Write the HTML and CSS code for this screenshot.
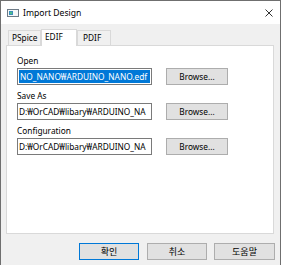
FILE: index.html
```html
<!DOCTYPE html>
<html lang="ko">
<head>
    <meta charset="UTF-8">
    <title>Import Design</title>
    <link rel="stylesheet" href="styles.css">
</head>
<body>
    <div class="window">
        <!-- Titelleiste -->
        <div class="titlebar">
            <svg class="app-icon" width="12" height="8" viewBox="0 0 12 8">
                <rect x="0.5" y="0.5" width="11" height="7" fill="#f4f6f8" stroke="#6d7a86"/>
                <rect x="2" y="2" width="4" height="4" fill="#3b8fb8"/>
                <rect x="3" y="3" width="2" height="2" fill="#4fbf8a"/>
            </svg>
            <span class="title">Import Design</span>
            <svg class="close" width="8" height="8" viewBox="0 0 8 8">
                <path d="M0.5 0.5 L7.5 7.5 M7.5 0.5 L0.5 7.5" stroke="#333" stroke-width="1"/>
            </svg>
        </div>

        <!-- Reiter -->
        <div class="tabs">
            <div class="tab">PSpice</div>
            <div class="tab active">EDIF</div>
            <div class="tab">PDIF</div>
        </div>

        <div class="panel">
            <div class="field">
                <div class="label">Open</div>
                <div class="row">
                    <div class="textbox"><span class="selected">NO_NANO₩ARDUINO_NANO.edf</span></div>
                    <button class="browse">Browse...</button>
                </div>
            </div>
            <div class="field">
                <div class="label">Save As</div>
                <div class="row">
                    <div class="textbox">D:₩OrCAD₩libary₩ARDUINO_NA</div>
                    <button class="browse">Browse...</button>
                </div>
            </div>
            <div class="field">
                <div class="label">Configuration</div>
                <div class="row">
                    <div class="textbox">D:₩OrCAD₩libary₩ARDUINO_NA</div>
                    <button class="browse">Browse...</button>
                </div>
            </div>
        </div>

        <!-- Schaltflächen -->
        <div class="footer">
            <button class="btn default">확인</button>
            <button class="btn">취소</button>
            <button class="btn help">도움말</button>
        </div>
    </div>
</body>
</html>
```

FILE: styles.css
```css
body {
    margin: 0;
    background-color: #ffffff;
    font-family: "Noto Sans", "Noto Sans CJK KR", sans-serif;
    font-size: 8.3px;
    color: #000000;
}
.window {
    width: 281px;
    height: 265px;
    box-sizing: border-box;
    border: 1px solid #6f6f6f;
    border-bottom: none;
    background-color: #f0f0f0;
}
.titlebar {
    height: 23px;
    background-color: #ffffff;
    display: flex;
    align-items: center;
    padding-left: 6px;
    padding-right: 7px;
    padding-top: 1px;
    box-sizing: border-box;
}
.app-icon {
    margin-right: 4px;
}
.title {
    flex: 1;
    font-size: 8.6px;
}
.tabs {
    display: flex;
    align-items: flex-end;
    height: 21px;
    padding-left: 7px;
}
.tab {
    height: 14px;
    line-height: 14px;
    padding: 0 3px;
    border: 1px solid #d9d9d9;
    border-bottom: none;
    background-color: #f0f0f0;
}
.tab:first-child {
    width: 25px;
}
.tab:last-child {
    width: 24px;
    padding-left: 5px;
}
.tab.active {
    height: 16px;
    line-height: 13px;
    width: 28px;
    background-color: #ffffff;
    margin-bottom: -1px;
    position: relative;
}
.panel {
    margin: 0 6px 0 5px;
    height: 189px;
    box-sizing: border-box;
    background-color: #ffffff;
    border: 1px solid #d9d9d9;
    padding: 8px 0 0 10px;
}
.field {
    margin-bottom: 4px;
}
.label {
    height: 14px;
    line-height: 13px;
}
.row {
    display: flex;
    align-items: center;
    gap: 14px;
}
.textbox {
    width: 135px;
    height: 17px;
    box-sizing: border-box;
    border: 1px solid #7a7a7a;
    padding: 1px;
    line-height: 13px;
    white-space: nowrap;
    overflow: hidden;
}
.selected {
    display: inline-block;
    width: 129px;
    background-color: #0078d7;
    color: #ffffff;
    padding: 0 1px;
}
.browse, .btn {
    font-family: inherit;
    font-size: 8.3px;
    background-color: #e1e1e1;
    border: 1px solid #adadad;
    padding: 0;
    margin: 0;
    color: #000000;
}
.browse {
    width: 62px;
    height: 17px;
}
.footer {
    display: flex;
    justify-content: flex-end;
    gap: 8px;
    padding: 9px 5px 0 0;
}
.btn {
    width: 60px;
    height: 17px;
    font-size: 9px;
}
.btn.help {
    width: 61px;
    margin-left: -1px;
}
.btn.default {
    border: 1px solid #0078d7;
}
```
